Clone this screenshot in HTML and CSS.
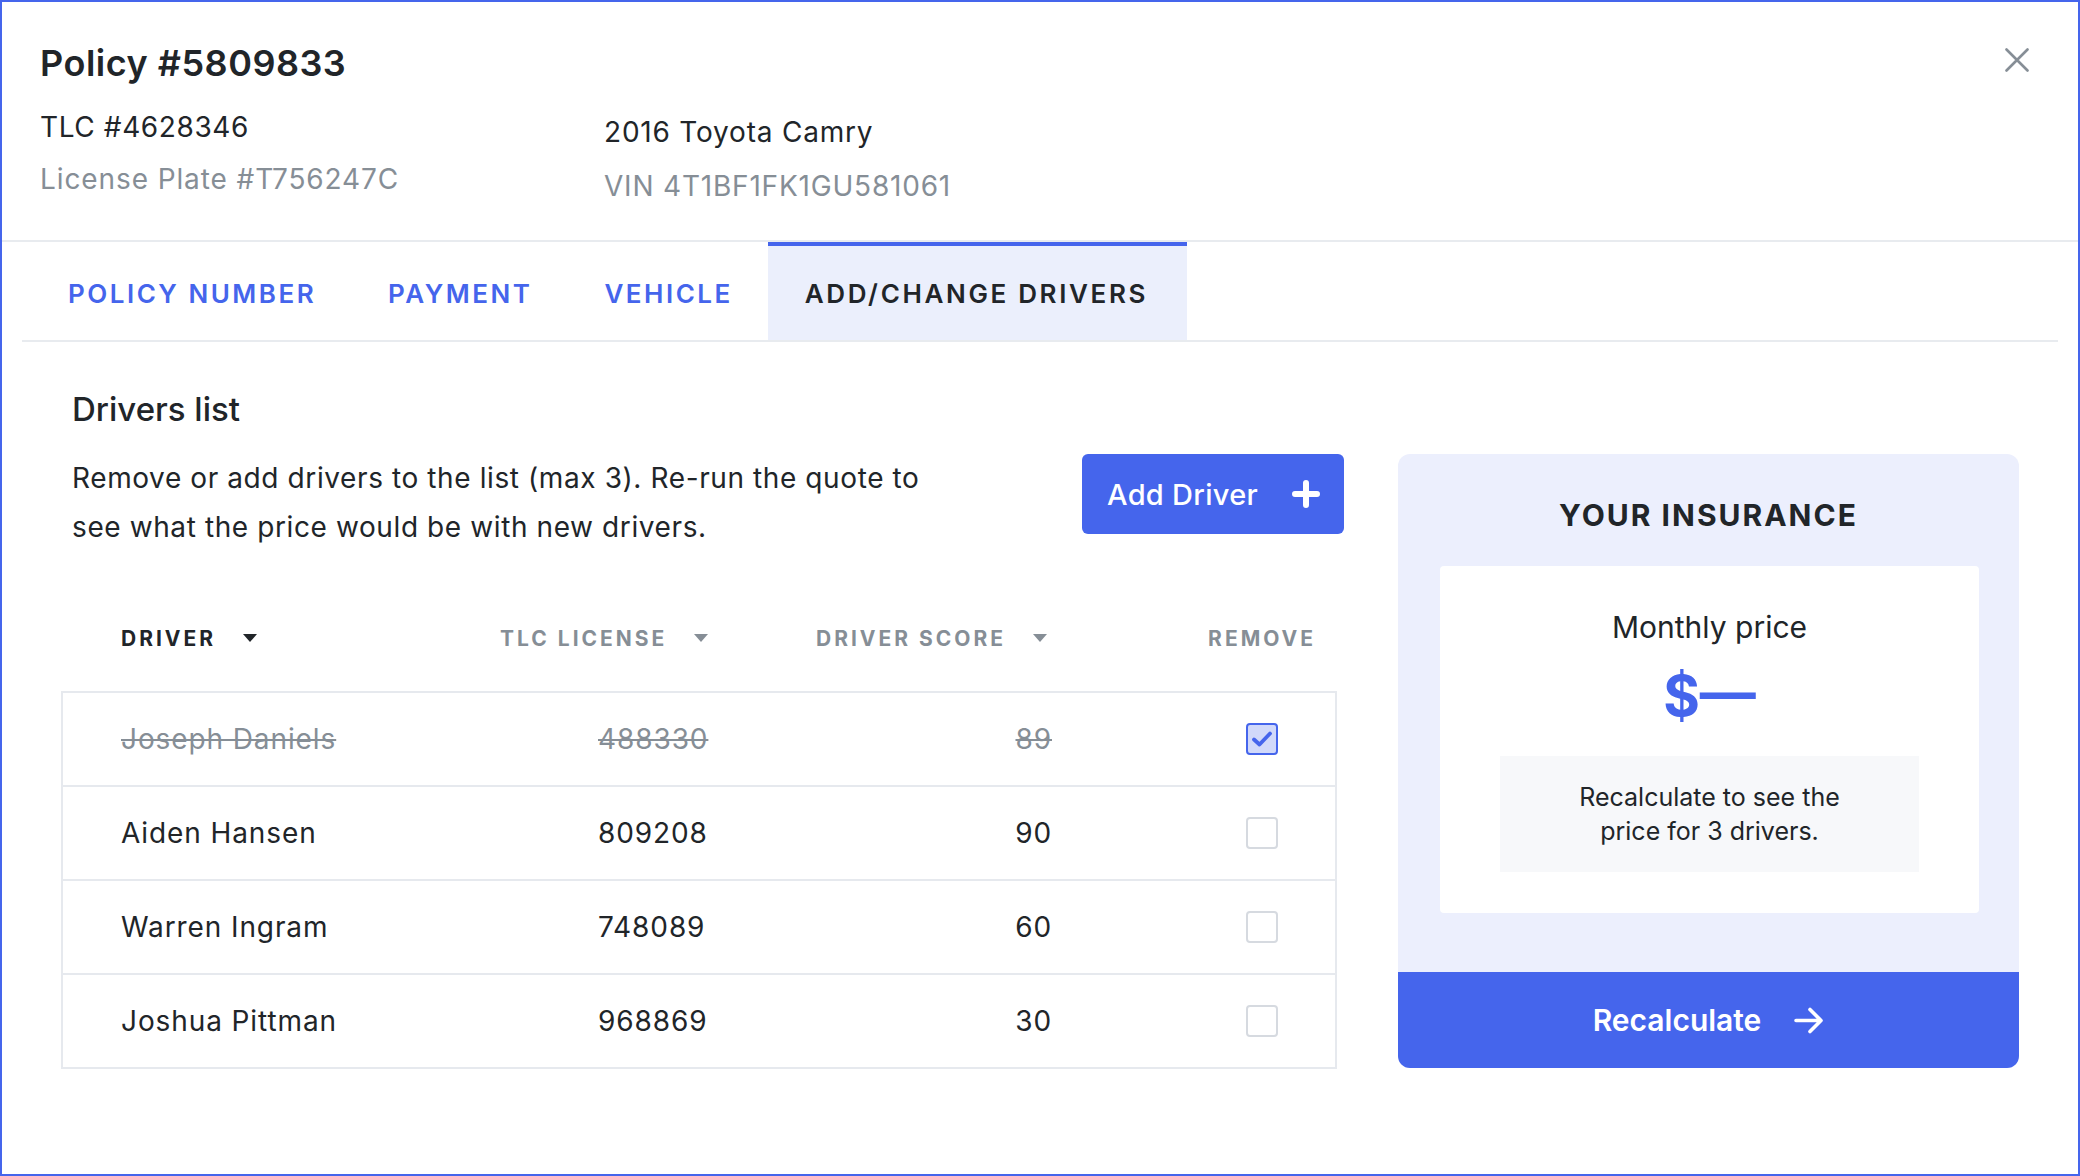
FILE: index.html
```html
<!DOCTYPE html>
<html lang="en">
<head>
<meta charset="utf-8">
<title>Policy #5809833</title>
<link rel="stylesheet" href="styles.css">
</head>
<body>
<div class="modal">
  <header class="modal-header">
    <div class="header-top">
      <h1 class="policy-title">Policy #5809833</h1>
      <button class="close-btn" aria-label="Close">
        <svg width="24" height="24" viewBox="0 0 24 24"><path d="M1.5 1.5 L22.5 22.5 M22.5 1.5 L1.5 22.5" stroke="#868e96" stroke-width="2.6" fill="none" stroke-linecap="round"/></svg>
      </button>
    </div>
    <div class="header-info">
      <div class="info-col info-driver">
        <div class="info-main">TLC #4628346</div>
        <div class="info-sub">License Plate #T756247C</div>
      </div>
      <div class="info-col info-vehicle">
        <div class="info-main">2016 Toyota Camry</div>
        <div class="info-sub">VIN 4T1BF1FK1GU581061</div>
      </div>
    </div>
  </header>

  <nav class="tabs">
    <a class="tab">Policy Number</a>
    <a class="tab">Payment</a>
    <a class="tab">Vehicle</a>
    <a class="tab tab-active">Add/Change Drivers</a>
  </nav>

  <main class="content">
    <h2 class="section-title">Drivers list</h2>
    <div class="section-body">
      <div class="drivers-col">
        <div class="intro">
          <p class="intro-text">Remove or add drivers to the list (max 3). Re-run the quote to<br>see what the price would be with new drivers.</p>
          <button class="btn-add">
            <span>Add Driver</span>
            <svg width="28" height="28" viewBox="0 0 28 28"><path d="M14 3 V25 M3 14 H25" stroke="#fff" stroke-width="6" stroke-linecap="round" fill="none"/></svg>
          </button>
        </div>

        <div class="thead">
          <div class="th th-active">Driver <span class="caret"></span></div>
          <div class="th">TLC License <span class="caret"></span></div>
          <div class="th">Driver Score <span class="caret"></span></div>
          <div class="th th-remove">Remove</div>
        </div>

        <div class="table">
          <div class="row row-removed">
            <div class="cell">Joseph Daniels</div>
            <div class="cell">488330</div>
            <div class="cell cell-score">89</div>
            <div class="cell cell-check"><span class="checkbox checked"><svg width="22" height="18" viewBox="0 0 22 18"><path d="M3 9.5 L8.5 14.5 L19 3.5" stroke="#4565ec" stroke-width="3.8" fill="none" stroke-linecap="round" stroke-linejoin="round"/></svg></span></div>
          </div>
          <div class="row">
            <div class="cell">Aiden Hansen</div>
            <div class="cell">809208</div>
            <div class="cell cell-score">90</div>
            <div class="cell cell-check"><span class="checkbox"></span></div>
          </div>
          <div class="row">
            <div class="cell">Warren Ingram</div>
            <div class="cell">748089</div>
            <div class="cell cell-score">60</div>
            <div class="cell cell-check"><span class="checkbox"></span></div>
          </div>
          <div class="row">
            <div class="cell">Joshua Pittman</div>
            <div class="cell">968869</div>
            <div class="cell cell-score">30</div>
            <div class="cell cell-check"><span class="checkbox"></span></div>
          </div>
        </div>
      </div>

      <aside class="insurance-card">
        <h3 class="card-title">Your Insurance</h3>
        <div class="price-box">
          <div class="price-label">Monthly price</div>
          <div class="price-value">$—</div>
          <div class="price-note">Recalculate to see the<br>price for 3 drivers.</div>
        </div>
        <button class="btn-recalc">
          <span>Recalculate</span>
          <svg width="30" height="27" viewBox="0 0 30 27"><path d="M2 13.5 H27 M16 2.5 L27 13.5 L16 24.5" stroke="#fff" stroke-width="3.6" fill="none" stroke-linecap="round" stroke-linejoin="round"/></svg>
        </button>
      </aside>
    </div>
  </main>
</div>
</body>
</html>
```

FILE: styles.css
```css
* { box-sizing: border-box; }

html, body {
  margin: 0;
  padding: 0;
  background: #ffffff;
}

body {
  font-family: "Inter", "Lato", "Liberation Sans", sans-serif;
  color: #212529;
}

.modal {
  width: 2080px;
  height: 1176px;
  border: 2px solid #4565ec;
  background: #ffffff;
  overflow: hidden;
}

/* ---------- header ---------- */
.modal-header {
  height: 240px;
  padding: 39px 49px 0 38px;
  border-bottom: 2px solid #e8ebef;
}

.header-top {
  display: flex;
  justify-content: space-between;
  align-items: flex-start;
}

.policy-title {
  margin: 0;
  font-size: 36px;
  line-height: 44px;
  font-weight: 600;
  letter-spacing: 0.5px;
  color: #212529;
}

.close-btn {
  margin-top: 7px;
  width: 24px;
  height: 24px;
  padding: 0;
  border: 0;
  background: none;
  display: flex;
}

.header-info {
  display: flex;
  margin-top: 16px;
}

.info-driver {
  width: 564px;
  font-size: 28px;
  line-height: 52px;
}

.info-vehicle {
  padding-top: 4px;
  font-size: 28px;
  line-height: 54px;
  letter-spacing: 0.8px;
}

.info-driver .info-main { letter-spacing: 0.6px; }
.info-driver .info-sub { letter-spacing: 0.9px; }

.info-main { color: #212529; }
.info-sub { color: #868e96; }

/* ---------- tabs ---------- */
.tabs {
  display: flex;
  height: 100px;
  margin: 0 20px;
  padding-left: 9px;
  border-bottom: 2px solid #e8ebef;
}

.tab {
  display: flex;
  align-items: center;
  padding: 0 35px 0 37px;
  border-top: 4px solid transparent;
  font-size: 26px;
  font-weight: 600;
  letter-spacing: 2.5px;
  text-transform: uppercase;
  color: #4565ec;
}

.tab-active {
  padding-right: 39px;
  border-top-color: #4565ec;
  background: #ebeffc;
  color: #212529;
  letter-spacing: 2.65px;
}

/* ---------- content ---------- */
.content {
  padding: 47px 59px 0 59px;
}

.section-title {
  margin: 0 0 0 11px;
  font-size: 33px;
  line-height: 40px;
  font-weight: 500;
  color: #212529;
}

.section-body {
  display: flex;
  gap: 54px;
  margin-top: 25px;
}

.drivers-col {
  width: 1283px;
}

.intro {
  display: flex;
  justify-content: space-between;
  align-items: flex-start;
  padding-left: 11px;
}

.intro-text {
  margin: 0;
  font-size: 28px;
  line-height: 49px;
  letter-spacing: 0.6px;
  color: #212529;
  white-space: nowrap;
}

.btn-add {
  width: 262px;
  height: 80px;
  padding: 0 24px 0 25px;
  border: 0;
  border-radius: 6px;
  background: #4565ec;
  color: #ffffff;
  font-family: inherit;
  font-size: 29px;
  font-weight: 500;
  letter-spacing: 0.3px;
  display: flex;
  align-items: center;
  justify-content: space-between;
}

/* table header */
.thead {
  width: 1276px;
  height: 40px;
  margin-top: 66px;
  margin-bottom: 33px;
  padding: 0 21px 0 60px;
  display: grid;
  grid-template-columns: 379px 316px 1fr auto;
  align-items: center;
}

.th {
  display: flex;
  align-items: center;
  font-size: 21px;
  font-weight: 700;
  letter-spacing: 3px;
  text-transform: uppercase;
  color: #868e96;
}

.th-active { color: #212529; }

.caret {
  margin-left: 27px;
  width: 0;
  height: 0;
  border-left: 7.5px solid transparent;
  border-right: 7.5px solid transparent;
  border-top: 8px solid currentColor;
}

/* table body */
.table {
  width: 1276px;
  border: 2px solid #e6e9ee;
  border-bottom: 0;
}

.row {
  height: 94px;
  padding: 0 57px 0 58px;
  border-bottom: 2px solid #e6e9ee;
  display: grid;
  grid-template-columns: 477px 300px 154px 1fr;
  align-items: center;
  font-size: 28px;
  letter-spacing: 0.9px;
  color: #212529;
}

.cell-score { text-align: right; }

.cell-check {
  display: flex;
  justify-content: flex-end;
}

.row-removed .cell {
  color: #868e96;
  text-decoration: line-through;
  text-decoration-thickness: 2px;
}

.checkbox {
  width: 32px;
  height: 32px;
  border: 2px solid #d6dae0;
  border-radius: 4px;
  background: #ffffff;
  display: flex;
  align-items: center;
  justify-content: center;
}

.checkbox.checked {
  border-color: #4565ec;
  background: #d1d9fa;
}

/* ---------- insurance card ---------- */
.insurance-card {
  width: 621px;
  height: 614px;
  border-radius: 12px;
  background: #eceffd;
  overflow: hidden;
  display: flex;
  flex-direction: column;
}

.card-title {
  margin: 41px 0 0;
  text-align: center;
  font-size: 30px;
  line-height: 40px;
  font-weight: 700;
  letter-spacing: 2px;
  text-transform: uppercase;
  color: #212529;
}

.price-box {
  margin: 31px 40px 0 42px;
  padding: 41px 60px 41px;
  border-radius: 4px;
  background: #ffffff;
  text-align: center;
}

.price-label {
  font-size: 30px;
  line-height: 40px;
  color: #212529;
}

.price-value {
  margin-top: 17px;
  font-size: 56px;
  line-height: 64px;
  font-weight: 700;
  color: #4565ec;
}

.price-note {
  margin-top: 28px;
  padding: 24px;
  background: #f7f8fa;
  font-size: 25px;
  line-height: 34px;
  color: #212529;
}

.btn-recalc {
  margin-top: auto;
  height: 96px;
  border: 0;
  background: #4565ec;
  color: #ffffff;
  font-family: inherit;
  font-size: 30px;
  font-weight: 600;
  display: flex;
  align-items: center;
  justify-content: center;
  gap: 33px;
}
```
